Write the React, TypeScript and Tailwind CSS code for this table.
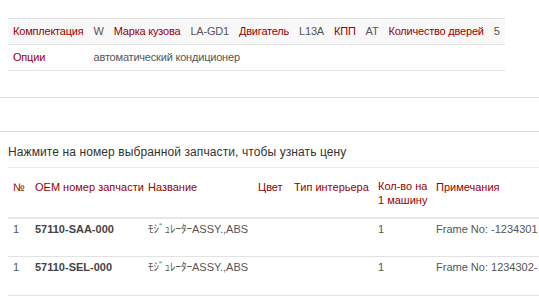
const SPEC = [
  { label: "Комплектация", value: "W" },
  { label: "Марка кузова", value: "LA-GD1" },
  { label: "Двигатель", value: "L13A" },
  { label: "КПП", value: "AT" },
  { label: "Количество дверей", value: "5" },
];

const PARTS = [
  { n: 1, oem: "57110-SAA-000", name: "ﾓｼﾞｭﾚｰﾀｰASSY.,ABS", qty: 1, note: "Frame No: -1234301" },
  { n: 1, oem: "57110-SEL-000", name: "ﾓｼﾞｭﾚｰﾀｰASSY.,ABS", qty: 1, note: "Frame No: 1234302-" },
];

const font = { fontFamily: '"Liberation Sans", Arial, "Noto Sans CJK JP", sans-serif' };

export default function App() {
  return (
    <div className="w-[539px] h-[305px] overflow-hidden bg-white text-[11px] text-[#555]" style={font}>
      <div className="px-2 pt-[18px]">
        <table className="border-collapse tracking-[-0.2px]">
          <tbody>
            <tr className="bg-[#f8f8f8] border-y border-[#e2e2e2] h-[26px]">
              {SPEC.map((s) => (
                <SpecPair key={s.label} label={s.label} value={s.value} />
              ))}
            </tr>
            <tr className="border-b border-[#e2e2e2] h-[26px]">
              <td className="px-[5px] text-[#990000] whitespace-nowrap">Опции</td>
              <td colSpan={9} className="px-[5px] whitespace-nowrap">автоматический кондиционер</td>
            </tr>
          </tbody>
        </table>
      </div>

      <div className="mt-[26px] h-[35px] border-y border-[#dcdcdc]" />

      <div className="pl-2">
        <p className="text-[12px] text-[#333] h-[35px] pt-[11px] tracking-[0.1px]">
          Нажмите на номер выбранной запчасти, чтобы узнать цену
        </p>
        <table className="table-fixed border-collapse w-[620px]">
          <thead>
            <tr className="border-t border-[#ebebeb] border-b-2 border-b-[#e8e8e0] h-[50px] text-[#990000] text-left whitespace-nowrap">
              <th className="w-[22px] font-normal align-top pt-[11px] pl-[5px]">№</th>
              <th className="w-[113px] font-normal align-top pt-[11px] pl-[5px]">OEM номер запчасти</th>
              <th className="w-[110px] font-normal align-top pt-[11px] pl-[5px]">Название</th>
              <th className="w-[36px] font-normal align-top pt-[11px] pl-[5px]">Цвет</th>
              <th className="w-[84px] font-normal align-top pt-[11px] pl-[5px]">Тип интерьера</th>
              <th className="w-[58px] font-normal align-top pt-[11px] pl-[5px] leading-[14px] whitespace-normal">
                Кол-во на 1 машину
              </th>
              <th className="font-normal align-top pt-[11px] pl-[5px]">Примечания</th>
            </tr>
          </thead>
          <tbody>
            {PARTS.map((p) => (
              <tr key={p.oem} className="border-b border-[#e2e2e2] h-[39px]">
                <td className="align-top pt-[2px] pl-[5px]">{p.n}</td>
                <td className="align-top pt-[2px] pl-[5px] font-bold text-[#444] whitespace-nowrap">{p.oem}</td>
                <td className="align-top pt-[2px] pl-[5px] whitespace-nowrap">{p.name}</td>
                <td className="align-top pt-[2px] pl-[5px]" />
                <td className="align-top pt-[2px] pl-[5px]" />
                <td className="align-top pt-[2px] pl-[5px]">{p.qty}</td>
                <td className="align-top pt-[2px] pl-[5px] whitespace-nowrap">{p.note}</td>
              </tr>
            ))}
          </tbody>
        </table>
      </div>
    </div>
  );
}

function SpecPair({ label, value }: { label: string; value: string }) {
  return (
    <>
      <td className="px-[5px] text-[#990000] whitespace-nowrap">{label}</td>
      <td className="px-[5px] whitespace-nowrap">{value}</td>
    </>
  );
}
